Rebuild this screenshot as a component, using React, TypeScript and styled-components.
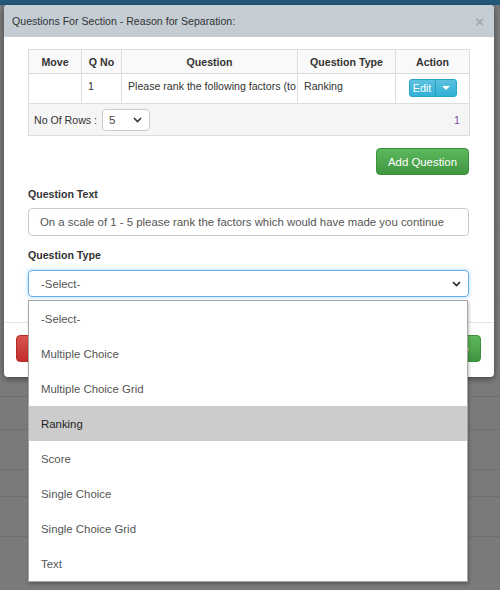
import React from 'react';
import styled, { createGlobalStyle } from 'styled-components';

const GlobalStyle = createGlobalStyle`
  html, body {
    margin: 0;
    padding: 0;
  }
  body {
    font-family: "Liberation Sans", Arial, sans-serif;
    font-size: 10.6px;
    color: #333;
  }
  * {
    box-sizing: border-box;
  }
`;

const bgRows = [63, 160, 72, 97, 33, 40, 27, 40];

const questionTypes = [
  '-Select-',
  'Multiple Choice',
  'Multiple Choice Grid',
  'Ranking',
  'Score',
  'Single Choice',
  'Single Choice Grid',
  'Text',
];

const Chevron = ({ color = '#333' }: { color?: string }) => (
  <svg width="9" height="6" viewBox="0 0 9 6">
    <polyline points="1,1 4.5,4.5 8,1" fill="none" stroke={color} strokeWidth="1.6" />
  </svg>
);

export default function App() {
  return (
    <Page>
      <GlobalStyle />
      <NavStrip />
      {bgRows.map((h, i) => (
        <BgRow key={i} style={{ height: h }} />
      ))}

      <Modal>
        <ModalHeader>
          <span>Questions For Section - Reason for Separation:</span>
          <Close>×</Close>
        </ModalHeader>

        <ModalBody>
          <Table>
            <colgroup>
              <col style={{ width: 53 }} />
              <col style={{ width: 40 }} />
              <col style={{ width: 176 }} />
              <col style={{ width: 98 }} />
              <col style={{ width: 74 }} />
            </colgroup>
            <thead>
              <tr>
                <Th>Move</Th>
                <Th>Q No</Th>
                <Th>Question</Th>
                <Th>Question Type</Th>
                <Th>Action</Th>
              </tr>
            </thead>
            <tbody>
              <tr>
                <Td />
                <Td>1</Td>
                <Td>Please rank the following factors (to</Td>
                <Td>Ranking</Td>
                <Td $center>
                  <SplitButton>
                    <EditPart>Edit</EditPart>
                    <CaretPart>
                      <Caret />
                    </CaretPart>
                  </SplitButton>
                </Td>
              </tr>
            </tbody>
            <tfoot>
              <tr>
                <FootCell colSpan={5}>
                  <FootBar>
                    <RowsPicker>
                      <span>No Of Rows :</span>
                      <SmallSelect>
                        <span>5</span>
                        <Chevron />
                      </SmallSelect>
                    </RowsPicker>
                    <PageCount>1</PageCount>
                  </FootBar>
                </FootCell>
              </tr>
            </tfoot>
          </Table>

          <ButtonRow>
            <GreenButton>Add Question</GreenButton>
          </ButtonRow>

          <Label>Question Text</Label>
          <TextInput>On a scale of 1 - 5 please rank the factors which would have made you continue</TextInput>

          <Label>Question Type</Label>
          <SelectWrap>
            <FocusedSelect>
              <span>-Select-</span>
              <Chevron color="#222" />
            </FocusedSelect>
            <OptionList>
              {questionTypes.map((t) => (
                <OptionItem key={t} $active={t === 'Ranking'}>
                  {t}
                </OptionItem>
              ))}
            </OptionList>
          </SelectWrap>
        </ModalBody>

        <ModalFooter>
          <RedButton>C</RedButton>
          <GreenButton>e</GreenButton>
        </ModalFooter>
      </Modal>
    </Page>
  );
}

const Page = styled.div`
  position: relative;
  width: 500px;
  height: 590px;
  overflow: hidden;
  background: #7a7a7a;
`;

const NavStrip = styled.div`
  height: 5px;
  background: #24587a;
`;

const BgRow = styled.div`
  border-bottom: 1px solid #6f6f6f;
`;

const Modal = styled.div`
  position: absolute;
  left: 4px;
  top: 5px;
  width: 490px;
  background: #fff;
  border-radius: 4px;
  box-shadow: 0 2px 6px rgba(0, 0, 0, 0.45);
`;

const ModalHeader = styled.div`
  height: 32px;
  display: flex;
  align-items: center;
  justify-content: space-between;
  padding: 0 8px;
  background: #c4cdd4;
  border-radius: 4px 4px 0 0;
  font-size: 10.6px;
  color: #333;
`;

const Close = styled.span`
  font-size: 15px;
  font-weight: bold;
  color: #a3abb1;
  margin-right: 2px;
`;

const ModalBody = styled.div`
  padding: 12px 25px 25px 24px;
`;

const Table = styled.table`
  width: 441px;
  table-layout: fixed;
  border-collapse: collapse;
  font-size: 10.6px;
`;

const Th = styled.th`
  height: 24px;
  padding: 0 6px;
  border: 1px solid #ddd;
  background: #f9f9f9;
  font-weight: bold;
  text-align: center;
  color: #333;
`;

const Td = styled.td<{ $center?: boolean }>`
  height: 30px;
  padding: 6px 6px 0;
  border: 1px solid #ddd;
  vertical-align: top;
  white-space: nowrap;
  overflow: hidden;
  text-align: ${(p) => (p.$center ? 'center' : 'left')};
  color: #333;
`;

const SplitButton = styled.div`
  display: inline-flex;
  height: 18px;
  margin-top: -1px;
  border: 1px solid #28a4c9;
  border-radius: 3px;
  overflow: hidden;
  background: linear-gradient(#5bc0de, #31b0d5);
  color: #fff;
`;

const EditPart = styled.span`
  width: 26px;
  display: flex;
  align-items: center;
  justify-content: center;
  font-size: 10.6px;
  border-right: 1px solid #2a9fc2;
`;

const CaretPart = styled.span`
  width: 20px;
  display: flex;
  align-items: center;
  justify-content: center;
`;

const Caret = styled.span`
  width: 0;
  height: 0;
  border-left: 4px solid transparent;
  border-right: 4px solid transparent;
  border-top: 4px solid #fff;
`;

const FootCell = styled.td`
  height: 32px;
  padding: 0 9px 0 5px;
  border: 1px solid #ddd;
  background: #f5f5f5;
`;

const FootBar = styled.div`
  display: flex;
  align-items: center;
  justify-content: space-between;
`;

const RowsPicker = styled.div`
  display: flex;
  align-items: center;
  gap: 5px;
  color: #333;
  white-space: nowrap;
`;

const SmallSelect = styled.div`
  width: 48px;
  height: 22px;
  display: flex;
  align-items: center;
  justify-content: space-between;
  padding: 0 7px 0 6px;
  background: #fff;
  border: 1px solid #ccc;
  border-radius: 4px;
  font-size: 11.5px;
  color: #444;
`;

const PageCount = styled.span`
  color: #7a4c9e;
`;

const ButtonRow = styled.div`
  display: flex;
  justify-content: flex-end;
  width: 441px;
  margin-top: 12px;
`;

const baseButton = `
  height: 27px;
  padding: 0 11px;
  border-radius: 4px;
  font-family: "Liberation Sans", Arial, sans-serif;
  font-size: 11.4px;
  color: #fff;
  cursor: pointer;
`;

const GreenButton = styled.button`
  ${baseButton}
  border: 1px solid #3e8f3e;
  background: linear-gradient(#5cb85c, #419641);
`;

const RedButton = styled.button`
  ${baseButton}
  border: 1px solid #b92c28;
  background: linear-gradient(#d9534f, #c12e2a);
`;

const Label = styled.div`
  margin: 13px 0 8px;
  font-weight: bold;
  font-size: 10.6px;
  line-height: 12px;
  color: #333;
`;

const TextInput = styled.div`
  width: 441px;
  height: 28px;
  display: flex;
  align-items: center;
  padding: 0 11px;
  border: 1px solid #ccc;
  border-radius: 4px;
  font-size: 11.4px;
  color: #555;
  white-space: nowrap;
  overflow: hidden;
`;

const SelectWrap = styled.div`
  position: relative;
  width: 441px;
  margin-top: 9px;
`;

const FocusedSelect = styled.div`
  height: 27px;
  display: flex;
  align-items: center;
  justify-content: space-between;
  padding: 0 7px 0 12px;
  border: 1px solid #66afe9;
  border-radius: 4px;
  box-shadow: 0 0 4px rgba(102, 175, 233, 0.6);
  font-size: 11.4px;
  color: #555;
`;

const OptionList = styled.ul`
  position: absolute;
  z-index: 10;
  left: 0;
  top: 30px;
  width: 440px;
  margin: 0;
  padding: 0;
  list-style: none;
  background: #fff;
  border: 1px solid #a6a6a6;
  box-shadow: 1px 2px 3px rgba(0, 0, 0, 0.25);
`;

const OptionItem = styled.li<{ $active?: boolean }>`
  height: 35px;
  display: flex;
  align-items: center;
  padding-left: 12px;
  font-size: 11.4px;
  color: ${(p) => (p.$active ? '#222' : '#555')};
  background: ${(p) => (p.$active ? '#cccccc' : '#fff')};
`;

const ModalFooter = styled.div`
  display: flex;
  justify-content: space-between;
  padding: 12px 13px 15px 12px;
  border-top: 1px solid #e5e5e5;
`;
